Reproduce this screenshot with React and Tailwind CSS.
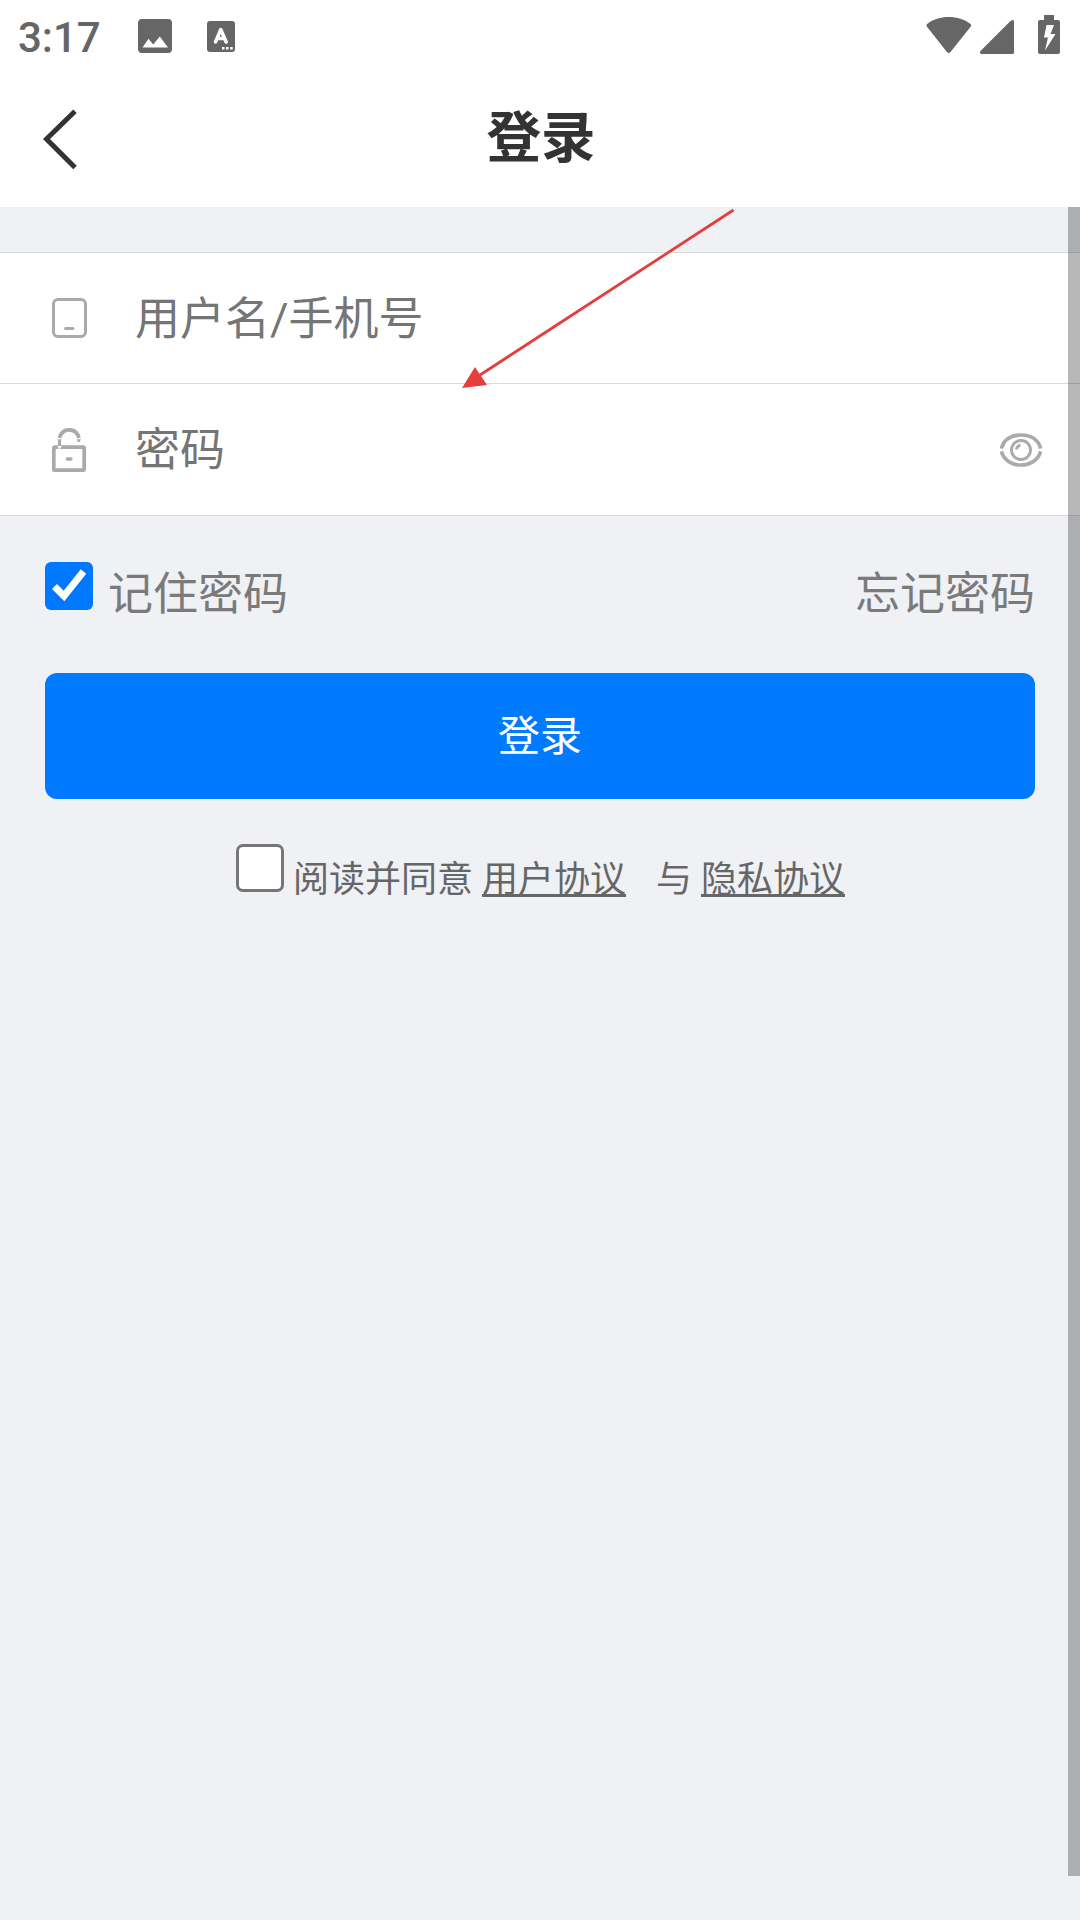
import React from "react";

function StatusBar() {
  return (
    <div className="flex h-[72px] items-center pl-[18px] text-[#666666]">
      <span className="w-[84px] pt-[3px] text-[42px] leading-[42px] font-medium">3:17</span>
      <svg className="ml-[36px] h-[34px] w-[34px]" viewBox="0 0 34 34" fill="currentColor">
        <path fillRule="evenodd" d="M4 0H30Q34 0 34 4V30Q34 34 30 34H4Q0 34 0 30V4Q0 0 4 0ZM4.500 28.500H30L21.800 17.400L15.200 25.600L10.500 19.800Z" />
      </svg>
      <svg className="ml-[35px] h-[31px] w-[28px]" viewBox="0 0 28 31">
        <rect width="28" height="31" rx="3" fill="#666666" />
        <path d="M8.500 21L13.800 8.500L19.200 21M10.500 17.500H17" fill="none" stroke="#fff" strokeWidth="3.500" strokeLinejoin="round" strokeLinecap="round" />
        <path d="M15 26h2.500v2.500h-2.500zM19 26h2.500v2.500h-2.500zM23.200 26h2.500v2.500h-2.500z" fill="#fff" />
      </svg>
      <div className="ml-auto flex h-full items-start pr-[20px]">
        <svg className="mt-[17px] h-[36px] w-[46px]" viewBox="0 0 46 36" fill="currentColor">
          <path d="M1 9.800Q-.3 8 1.400 6.800C7 2.300 14.500 0 22.800 0S38.500 2.300 44.200 6.800Q46 8 44.600 9.800L24.500 35Q22.700 37 20.900 35Z" />
        </svg>
        <svg className="mt-[20px] ml-[8px] h-[34px] w-[34px]" viewBox="0 0 34 34" fill="currentColor">
          <path d="M31 .5Q34-1 34 2V32.500Q34 34 32.500 34H1.500Q-1 33 .5 31Z" />
        </svg>
        <svg className="mt-[15px] ml-[24px] h-[39px] w-[22px]" viewBox="0 0 22 39" fill="currentColor">
          <path fillRule="evenodd" d="M6 0H16V5H20Q22 5 22 7V37Q22 39 20 39H2Q0 39 0 37V7Q0 5 2 5H6ZM8.500 10L6 22.500H10L7 35.500L17.500 19H12.500L16 10Z" />
        </svg>
      </div>
    </div>
  );
}

function Header() {
  return (
    <div className="grid h-[135px] grid-cols-3 items-start">
      <svg className="mt-[36px] ml-[42px] h-[62px] w-[36px]" viewBox="0 0 36 62">
        <path d="M33 3.200L4.500 31L33 59.500" fill="none" stroke="#333333" strokeWidth="5" />
      </svg>
      <h1 className="mt-[26px] pl-[2px] text-center text-[54.500px] leading-[80px] font-bold text-[#333333]">登录</h1>
    </div>
  );
}

function PhoneIcon() {
  return (
    <svg className="h-[41px] w-[36px]" viewBox="0 0 36 41" fill="none" stroke="#aaaaaa">
      <rect x="1.500" y="1.500" width="32" height="37" rx="4.500" strokeWidth="3" />
      <path d="M13.500 30.500h7.500" strokeWidth="3" strokeLinecap="round" />
    </svg>
  );
}

function LockIcon() {
  return (
    <svg className="h-[44px] w-[36px]" viewBox="0 0 36 44" fill="none" stroke="#aaaaaa">
      <rect x="1.800" y="19.200" width="30.400" height="23" rx="1" strokeWidth="3.700" />
      <path d="M7.500 10C9 4.300 12.500 1.800 17.200 1.800S25.500 4.300 27 10" strokeWidth="3.700" />
      <path d="M7.500 11.300V18" strokeWidth="3.200" />
      <path d="M5.500 18L7.500 22L9.500 18Z" fill="#fff" stroke="none" />
      <path d="M24.800 11.200h4l-1 2.800h-2z" fill="#aaaaaa" stroke="none" />
      <path d="M15.500 31h3.300" strokeWidth="3.600" strokeLinecap="round" />
    </svg>
  );
}

function EyeIcon() {
  return (
    <svg className="h-[34px] w-[42px]" viewBox="0 0 42 34" fill="none" stroke="#aaaaaa">
      <path d="M1.300 15.500C4 6 12 2 21 2S38 6 40.700 15.500M1.300 18.300C4 27.500 12 32 21 32S38 27.500 40.700 18.300" strokeWidth="3.700" />
      <circle cx="21" cy="17" r="9.500" strokeWidth="2.900" />
      <path d="M16.500 16.500Q16.800 12.700 20.500 12.300" strokeWidth="3" />
    </svg>
  );
}

function Field({ icon, label, children }) {
  return (
    <div className="flex h-full items-center bg-white pr-[38px] pl-[52px] text-[45px] leading-[66px] text-[#757575]">
      {icon}
      <span className="ml-[47px] pt-[3px]">{label}</span>
      <span className="ml-auto">{children}</span>
    </div>
  );
}

function Arrow() {
  return (
    <svg className="pointer-events-none absolute top-[205px] left-[458px]" width="280" height="186" viewBox="0 0 280 186">
      <path d="M275.500 5L22 170" stroke="#e53e3e" strokeWidth="2.800" />
      <path d="M4 183L17 162L29 180Z" fill="#e53e3e" />
    </svg>
  );
}

export default function App() {
  return (
    <div className="relative h-[1920px] w-[1080px] overflow-hidden bg-[#eff1f5] font-['Roboto','Noto_Sans_CJK_SC',sans-serif]">
      <div className="h-[207px] bg-white">
        <StatusBar />
        <Header />
      </div>
      <div className="mt-[45px] border-y border-[#d9dadc]">
        <div className="h-[131px] border-b border-[#d9dadc]">
          <Field icon={<PhoneIcon />} label="用户名/手机号" />
        </div>
        <div className="h-[131px]">
          <Field icon={<LockIcon />} label="密码"><EyeIcon /></Field>
        </div>
      </div>
      <div className="px-[45px]">
        <div className="flex h-[157px] items-start justify-between text-[45px] leading-[66px] text-[#7a7a7a]">
          <div className="flex items-start">
            <svg className="mt-[46px] h-[48px] w-[48px]" viewBox="0 0 48 48">
              <rect width="48" height="48" rx="6" fill="#0078ff" />
              <path d="M9.500 24.500L19 34L38.500 9.500" fill="none" stroke="#fff" strokeWidth="7" />
            </svg>
            <span className="mt-[46px] ml-[15px]">记住密码</span>
          </div>
          <span className="mt-[46px]">忘记密码</span>
        </div>
        <button className="flex h-[126px] w-full items-center justify-center rounded-[12px] bg-[#007aff] pt-[2px] text-[42px] leading-[60px] text-white">登录</button>
        <div className="mt-[45px] flex items-start justify-center text-[36px] leading-[54px] text-[#666666]">
          <span className="h-[48px] w-[48px] rounded-[7px] border-[3px] border-[#767676] bg-white" />
          <span className="mt-[9px] ml-[9px]">阅读并同意</span>
          <span className="mt-[9px] ml-[9px] h-[44px] border-b-[3px] border-[#666666]">用户协议</span>
          <span className="mt-[9px] ml-[30px]">与</span>
          <span className="mt-[9px] -mr-px ml-[9px] h-[44px] border-b-[3px] border-[#666666]">隐私协议</span>
        </div>
      </div>
      <Arrow />
      <div className="absolute top-[207px] right-0 h-[1669px] w-[12px] bg-black/28" />
    </div>
  );
}
